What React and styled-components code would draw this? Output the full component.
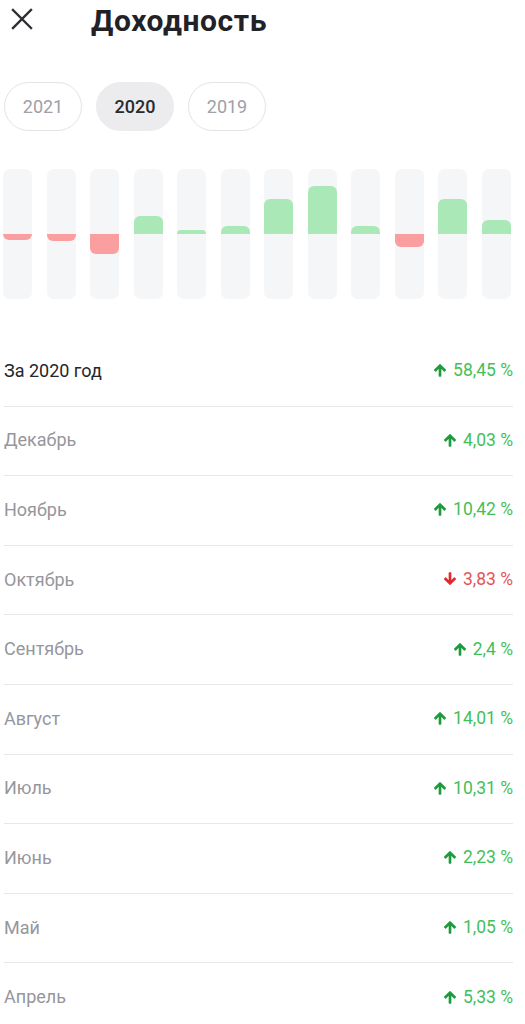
import React from "react";
import styled, { createGlobalStyle } from "styled-components";

const Global = createGlobalStyle`
  html, body { margin: 0; padding: 0; background: #fff; }
  body { font-family: Roboto, "Noto Sans", Arial, sans-serif; -webkit-font-smoothing: antialiased; }
`;

const Page = styled.div`
  width: 525px;
  display: flex;
  flex-direction: column;
`;

const Header = styled.header`
  display: flex;
  align-items: center;
  height: 42px;
  padding-left: 10px;
`;

const CloseButton = styled.button`
  border: 0;
  background: none;
  padding: 0;
  width: 24px;
  height: 24px;
  display: flex;
  align-items: center;
  justify-content: center;
  color: #2f2f33;
  margin-top: -4px;
`;

const Title = styled.h1`
  margin: -2px 0 0 57px;
  font-size: 30px;
  font-weight: 700;
  color: #222226;
  letter-spacing: 0.6px;
`;

const Pills = styled.div`
  display: flex;
  gap: 14px;
  padding: 40px 0 0 4px;
`;

const Pill = styled.button`
  width: 78px;
  height: 49px;
  border-radius: 25px;
  box-sizing: border-box;
  font-family: Roboto, "Noto Sans", Arial, sans-serif;
  font-size: 18px;
  border: 1.5px solid ${(p) => (p.$active ? "#ececee" : "#e3e3e6")};
  background: ${(p) => (p.$active ? "#ececee" : "#fff")};
  color: ${(p) => (p.$active ? "#2a2a2e" : "#a0a0a6")};
  font-weight: ${(p) => (p.$active ? 500 : 400)};
  padding: 0;
`;

const Chart = styled.div`
  display: grid;
  grid-template-columns: repeat(12, 29px);
  column-gap: 14.5px;
  padding: 38px 0 0 3px;
`;

const Column = styled.div`
  height: 130px;
  background: #f5f6f8;
  border-radius: 7px;
  display: grid;
  grid-template-rows: 65px 65px;
`;

const Upper = styled.div`
  display: flex;
  align-items: flex-end;
`;

const Lower = styled.div`
  display: flex;
  align-items: flex-start;
`;

const Bar = styled.div`
  width: 100%;
  background: ${(p) => (p.$neg ? "#fb9e9f" : "#abe8b7")};
  border-radius: ${(p) => (p.$neg ? "0 0 6px 6px" : "6px 6px 0 0")};
`;

const List = styled.div`
  display: flex;
  flex-direction: column;
  margin: 38px 12px 0 4px;
`;

const Row = styled.div`
  height: 69.6px;
  box-sizing: border-box;
  display: flex;
  align-items: center;
  justify-content: space-between;
  border-bottom: 1.5px solid ${(p) => (p.$last ? "transparent" : "#e8e8ea")};
  padding-bottom: 2px;
`;

const Label = styled.span`
  font-size: 18px;
  color: ${(p) => (p.$strong ? "#26262a" : "#96969c")};
`;

const Value = styled.span`
  display: flex;
  align-items: center;
  gap: 5px;
  font-size: 17.5px;
  color: ${(p) => (p.$neg ? "#e55357" : "#43bf59")};
`;

const ArrowIcon = styled.svg`
  width: 16px;
  height: 16px;
  color: ${(p) => (p.$neg ? "#e02a2e" : "#1e9b3c")};
  transform: ${(p) => (p.$neg ? "rotate(180deg)" : "none")};
`;

const Arrow = ({ neg }) => (
  <ArrowIcon $neg={neg} viewBox="0 0 24 24" aria-hidden="true">
    <path
      fill="currentColor"
      stroke="currentColor"
      strokeWidth="2"
      strokeLinejoin="round"
      d="M4 12l1.41 1.41L11 7.83V21h2V7.83l5.58 5.59L20 12l-8-8-8 8z"
    />
  </ArrowIcon>
);

const months = [
  { name: "Январь", v: -1.8 },
  { name: "Февраль", v: -2.1 },
  { name: "Март", v: -5.8 },
  { name: "Апрель", v: 5.33 },
  { name: "Май", v: 1.05 },
  { name: "Июнь", v: 2.23 },
  { name: "Июль", v: 10.31 },
  { name: "Август", v: 14.01 },
  { name: "Сентябрь", v: 2.4 },
  { name: "Октябрь", v: -3.83 },
  { name: "Ноябрь", v: 10.42 },
  { name: "Декабрь", v: 4.03 },
];

const rows = [
  { name: "За 2020 год", value: "58,45 %", neg: false, strong: true },
  { name: "Декабрь", value: "4,03 %" },
  { name: "Ноябрь", value: "10,42 %" },
  { name: "Октябрь", value: "3,83 %", neg: true },
  { name: "Сентябрь", value: "2,4 %" },
  { name: "Август", value: "14,01 %" },
  { name: "Июль", value: "10,31 %" },
  { name: "Июнь", value: "2,23 %" },
  { name: "Май", value: "1,05 %" },
  { name: "Апрель", value: "5,33 %" },
];

const SCALE = 3.4;

export default function App() {
  return (
    <Page>
      <Global />
      <Header>
        <CloseButton aria-label="Закрыть">
          <svg width="22" height="22" viewBox="0 0 22 22">
            <path d="M2 2L20 20M20 2L2 20" stroke="currentColor" strokeWidth="2.4" strokeLinecap="square" />
          </svg>
        </CloseButton>
        <Title>Доходность</Title>
      </Header>
      <Pills>
        <Pill>2021</Pill>
        <Pill $active>2020</Pill>
        <Pill>2019</Pill>
      </Pills>
      <Chart>
        {months.map((m) => {
          const h = Math.max(3, Math.abs(m.v) * SCALE);
          const neg = m.v < 0;
          return (
            <Column key={m.name}>
              <Upper>{!neg && <Bar style={{ height: h }} />}</Upper>
              <Lower>{neg && <Bar $neg style={{ height: h }} />}</Lower>
            </Column>
          );
        })}
      </Chart>
      <List>
        {rows.map((r, i) => (
          <Row key={r.name} $last={i === rows.length - 1}>
            <Label $strong={r.strong}>{r.name}</Label>
            <Value $neg={r.neg}>
              <Arrow neg={r.neg} />
              {r.value}
            </Value>
          </Row>
        ))}
      </List>
    </Page>
  );
}
